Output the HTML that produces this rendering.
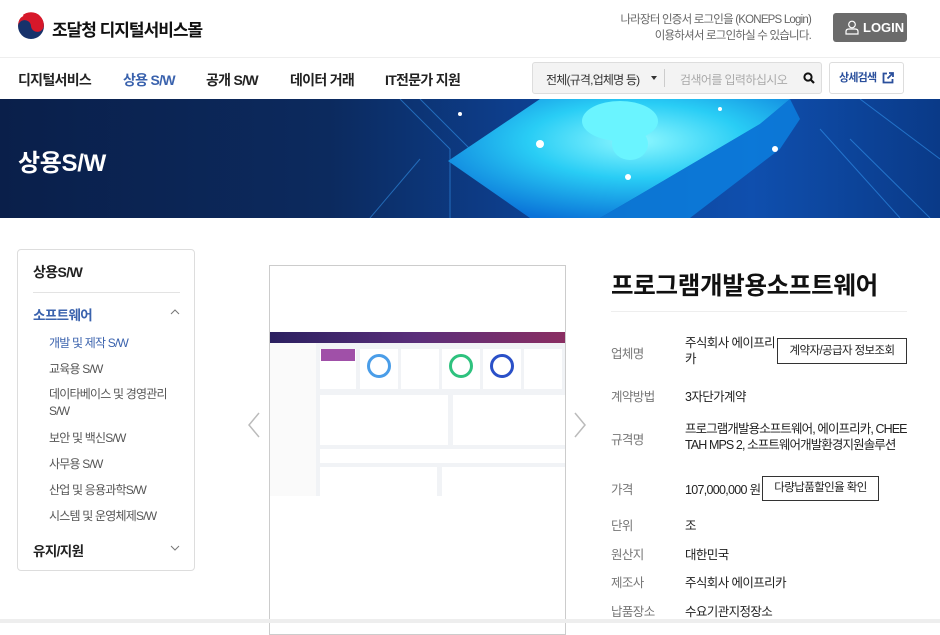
<!DOCTYPE html>
<html><head><meta charset="utf-8"><style>
*{margin:0;padding:0;box-sizing:border-box}
body{width:940px;height:623px;overflow:hidden;background:#fff;font-family:"Liberation Sans","Noto Sans CJK KR",sans-serif;color:#222;position:relative;letter-spacing:-0.6px}
.a{position:absolute;white-space:nowrap}
.nav{font-size:14px;font-weight:bold;color:#222;top:70px;letter-spacing:-0.7px}
.lab{left:611px;font-size:12.5px;color:#777}
.val{left:685px;font-size:12.5px;color:#222}
.btn{border:1px solid #333;font-size:11.5px;text-align:center;background:#fff}
.sm{left:49px;font-size:12px;color:#555;letter-spacing:-0.8px}
</style></head><body>
<svg class="a" style="left:17px;top:12px" width="28" height="28" viewBox="0 0 28 28">
<circle cx="14" cy="14" r="13" fill="#17326b"/>
<path d="M1.2 13 A12.8 12.8 0 0 1 26.8 13 A6.4 6.4 0 0 1 14 14 A6.4 6.4 0 0 0 1.2 15Z" fill="#d7182a"/>
<path d="M3 24 A13 13 0 0 1 6 3" fill="none" stroke="#fff" stroke-width="2"/>
</svg>
<div class="a" style="left:52px;top:16px;font-size:17px;font-weight:bold;color:#111;letter-spacing:-1px">조달청 디지털서비스몰</div>
<div class="a" style="right:129px;top:12px;font-size:11.5px;color:#666;text-align:right;line-height:16px;letter-spacing:-0.8px">나라장터 인증서 로그인을 (KONEPS Login)<br>이용하셔서 로그인하실 수 있습니다.</div>
<div class="a" style="left:833px;top:13px;width:74px;height:29px;background:#6b6b6b;border-radius:3px;color:#fff;font-size:13px;font-weight:bold;line-height:29px;padding-left:30px;letter-spacing:0">LOGIN
<svg style="position:absolute;left:12px;top:7px" width="14" height="15" viewBox="0 0 14 15"><circle cx="7" cy="4.5" r="3.3" fill="none" stroke="#fff" stroke-width="1.2"/><path d="M1 14 V11.5 Q1 9 4 9 H10 Q13 9 13 11.5 V14Z" fill="none" stroke="#fff" stroke-width="1.2"/></svg></div>
<div class="a" style="left:0;top:57px;width:940px;height:1px;background:#eee"></div>
<div class="a nav" style="left:18px">디지털서비스</div>
<div class="a nav" style="left:123px;color:#3a62ad">상용 S/W</div>
<div class="a nav" style="left:206px">공개 S/W</div>
<div class="a nav" style="left:290px">데이터 거래</div>
<div class="a nav" style="left:385px">IT전문가 지원</div>
<div class="a" style="left:532px;top:62px;width:290px;height:32px;background:#f3f3f3;border:1px solid #ddd;border-radius:3px"></div>
<div class="a" style="left:546px;top:71px;font-size:12px;color:#333;letter-spacing:-0.8px">전체(규격,업체명 등)</div>
<svg class="a" style="left:651px;top:76px" width="6" height="5"><path d="M0 0H6L3 4Z" fill="#333"/></svg>
<div class="a" style="left:664px;top:69px;width:1px;height:18px;background:#ccc"></div>
<div class="a" style="left:680px;top:71px;font-size:12px;color:#aaa;letter-spacing:-0.6px">검색어를 입력하십시오</div>
<svg class="a" style="left:803px;top:72px" width="12" height="12" viewBox="0 0 12 12"><circle cx="5" cy="5" r="3.6" fill="none" stroke="#111" stroke-width="2"/><path d="M8 8 L11 11" stroke="#111" stroke-width="2.2"/></svg>
<div class="a" style="left:829px;top:62px;width:75px;height:32px;border:1px solid #ddd;border-radius:3px;background:#fff;font-size:11px;font-weight:bold;color:#2a4f9c;line-height:30px;padding-left:9px;letter-spacing:-0.8px">상세검색
<svg style="position:absolute;left:52px;top:9px" width="12" height="12" viewBox="0 0 12 12"><path d="M5 1.5H1.5V10.5H10.5V7" fill="none" stroke="#2a4f9c" stroke-width="1.8"/><path d="M7 1H11V5M11 1L5.5 6.5" fill="none" stroke="#2a4f9c" stroke-width="1.8"/></svg></div>
<div class="a" style="left:0;top:99px;width:940px;height:119px;background:linear-gradient(90deg,#0a1f4a 0%,#0c2a5e 35%,#0d3f8e 55%,#0f4fae 80%,#0a3a88 100%);overflow:hidden">
<svg width="940" height="119" style="position:absolute;left:0;top:0">
<defs><radialGradient id="g" cx="0.55" cy="0.35" r="0.7"><stop offset="0" stop-color="#8ff8ff"/><stop offset="0.45" stop-color="#29cdf5"/><stop offset="1" stop-color="#0a72d8"/></radialGradient></defs>
<g stroke="#3aa4ff" stroke-width="1" opacity="0.5" fill="none">
<path d="M400 0 L450 50 L450 119"/><path d="M420 0 L480 60"/><path d="M860 0 L940 60"/><path d="M820 30 L900 119"/><path d="M850 40 L930 119"/><path d="M370 119 L420 60"/>
</g>
<polygon points="540,0 790,0 760,25 600,119 530,119 448,62" fill="url(#g)"/>
<polygon points="790,0 760,25 600,119 690,119 780,50 800,20" fill="#0c86e6" opacity="0.75"/>
<ellipse cx="620" cy="22" rx="38" ry="20" fill="#6af4ff"/>
<ellipse cx="630" cy="45" rx="18" ry="16" fill="#6af4ff"/>
<circle cx="460" cy="15" r="2" fill="#fff"/><circle cx="540" cy="45" r="4" fill="#fff"/><circle cx="628" cy="78" r="3" fill="#fff"/><circle cx="775" cy="50" r="3" fill="#fff"/><circle cx="720" cy="10" r="2" fill="#fff"/>
</svg>
<div style="position:absolute;left:18px;top:44px;font-size:24px;font-weight:bold;color:#fff;letter-spacing:-0.3px">상용S/W</div>
</div>
<div class="a" style="left:17px;top:249px;width:178px;height:322px;border:1px solid #ddd;border-radius:4px"></div>
<div class="a" style="left:33px;top:262px;font-size:14px;font-weight:bold;color:#222">상용S/W</div>
<div class="a" style="left:33px;top:292px;width:147px;height:1px;background:#e3e3e3"></div>
<div class="a" style="left:33px;top:304px;font-size:13.5px;font-weight:bold;color:#3a62ad">소프트웨어</div>
<svg class="a" style="left:170px;top:309px" width="10" height="6"><path d="M1 5L5 1L9 5" fill="none" stroke="#777"/></svg>
<div class="a sm" style="top:334px;color:#3a62ad">개발 및 제작 S/W</div>
<div class="a sm" style="top:360px">교육용 S/W</div>
<div class="a sm" style="top:386px;line-height:17px">데이타베이스 및 경영관리<br>S/W</div>
<div class="a sm" style="top:429px">보안 및 백신S/W</div>
<div class="a sm" style="top:455px">사무용 S/W</div>
<div class="a sm" style="top:481px">산업 및 응용과학S/W</div>
<div class="a sm" style="top:507px">시스템 및 운영체제S/W</div>
<div class="a" style="left:33px;top:540px;font-size:13.5px;font-weight:bold;color:#222">유지/지원</div>
<svg class="a" style="left:170px;top:545px" width="10" height="6"><path d="M1 1L5 5L9 1" fill="none" stroke="#777"/></svg>
<div class="a" style="left:269px;top:265px;width:297px;height:370px;border:1px solid #ccc"></div>
<div class="a" style="left:270px;top:332px;width:295px;height:164px;background:#f1f3f6;overflow:hidden">
<div style="height:11px;background:linear-gradient(90deg,#2b2060,#5a2e7a 50%,#8a2e62)"></div>
<div style="position:absolute;left:0;top:11px;width:46px;height:153px;background:#fafafa"></div>
<div style="position:absolute;left:50px;top:17px;width:36px;height:40px;background:#fff"></div>
<div style="position:absolute;left:51px;top:17px;width:34px;height:12px;background:#a050a8"></div>
<div style="position:absolute;left:90px;top:17px;width:38px;height:40px;background:#fff"></div>
<div style="position:absolute;left:131px;top:17px;width:38px;height:40px;background:#fff"></div>
<div style="position:absolute;left:172px;top:17px;width:38px;height:40px;background:#fff"></div>
<div style="position:absolute;left:213px;top:17px;width:38px;height:40px;background:#fff"></div>
<div style="position:absolute;left:254px;top:17px;width:38px;height:40px;background:#fff"></div>
<div style="position:absolute;left:97px;top:22px;width:24px;height:24px;border:3px solid #4a9de8;border-radius:50%"></div>
<div style="position:absolute;left:179px;top:22px;width:24px;height:24px;border:3px solid #2ec27e;border-radius:50%"></div>
<div style="position:absolute;left:220px;top:22px;width:24px;height:24px;border:3px solid #2a50c8;border-radius:50%"></div>
<div style="position:absolute;left:50px;top:63px;width:128px;height:50px;background:#fff"></div>
<div style="position:absolute;left:183px;top:63px;width:117px;height:50px;background:#fff"></div>
<div style="position:absolute;left:50px;top:117px;width:250px;height:14px;background:#fff"></div>
<div style="position:absolute;left:50px;top:135px;width:117px;height:30px;background:#fff"></div>
<div style="position:absolute;left:172px;top:135px;width:128px;height:30px;background:#fff"></div>
</div>
<svg class="a" style="left:247px;top:412px" width="14" height="26"><path d="M12 1L2 13L12 25" fill="none" stroke="#bbb" stroke-width="1.5"/></svg>
<svg class="a" style="left:573px;top:412px" width="14" height="26"><path d="M2 1L12 13L2 25" fill="none" stroke="#bbb" stroke-width="1.5"/></svg>
<div class="a" style="left:611px;top:267px;font-size:24.5px;font-weight:bold;color:#111;letter-spacing:-0.3px">프로그램개발용소프트웨어</div>
<div class="a" style="left:611px;top:311px;width:296px;height:1px;background:#eee"></div>
<div class="a lab" style="top:343px">업체명</div>
<div class="a val" style="top:335px;line-height:16px">주식회사 에이프리<br>카</div>
<div class="a btn" style="left:777px;top:338px;width:130px;height:26px;line-height:24px">계약자/공급자 정보조회</div>
<div class="a lab" style="top:386px">계약방법</div>
<div class="a val" style="top:386px">3자단가계약</div>
<div class="a lab" style="top:429px">규격명</div>
<div class="a val" style="top:421px;line-height:16px;letter-spacing:-0.9px">프로그램개발용소프트웨어, 에이프리카, CHEE<br>TAH MPS 2, 소프트웨어개발환경지원솔루션</div>
<div class="a lab" style="top:479px">가격</div>
<div class="a val" style="top:479px;letter-spacing:-0.7px">107,000,000 원</div>
<div class="a btn" style="left:762px;top:476px;width:117px;height:25px;line-height:23px">다량납품할인율 확인</div>
<div class="a lab" style="top:515px">단위</div>
<div class="a val" style="top:515px">조</div>
<div class="a lab" style="top:544px">원산지</div>
<div class="a val" style="top:544px">대한민국</div>
<div class="a lab" style="top:572px">제조사</div>
<div class="a val" style="top:572px">주식회사 에이프리카</div>
<div class="a lab" style="top:601px">납품장소</div>
<div class="a val" style="top:601px">수요기관지정장소</div>
<div class="a" style="left:0;top:619px;width:940px;height:4px;background:#eee"></div>
</body></html>
